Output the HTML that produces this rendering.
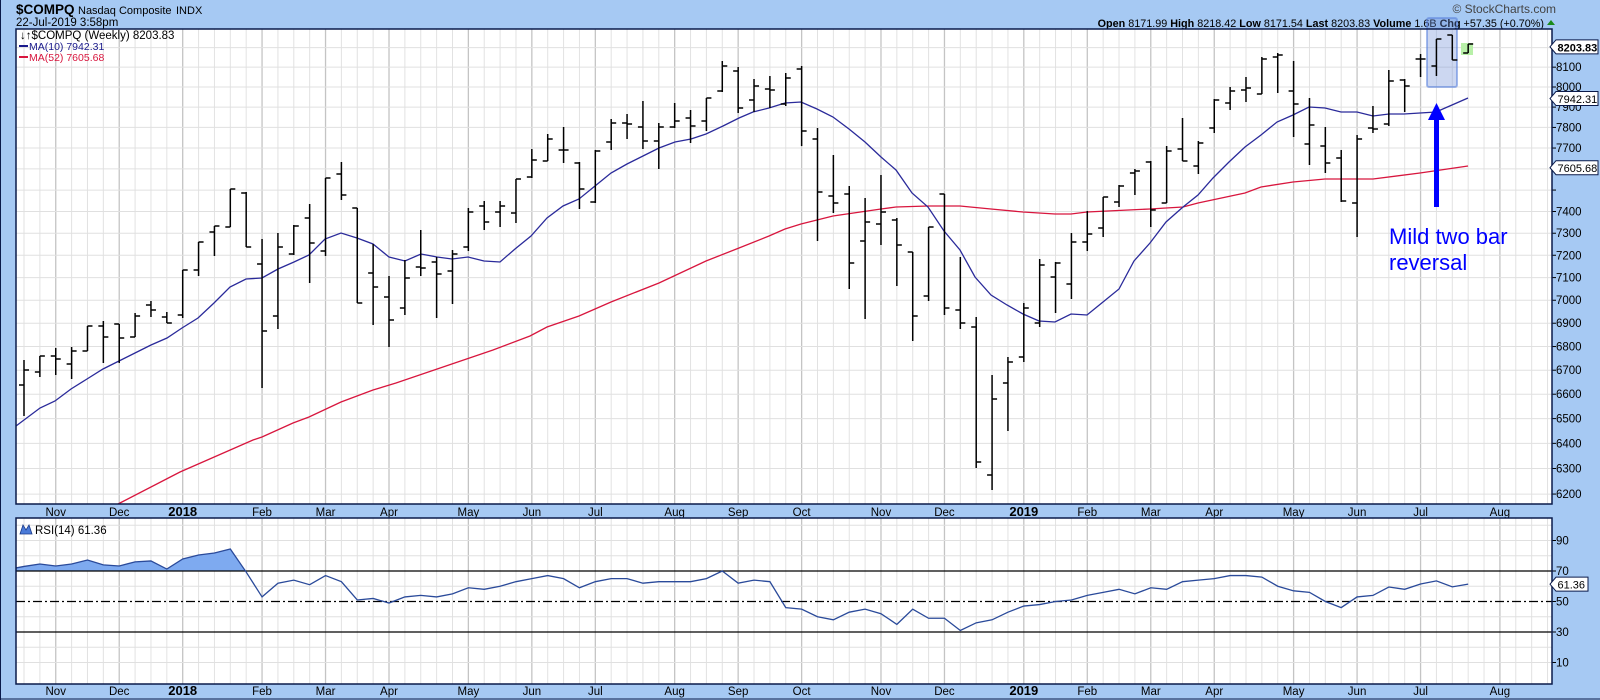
<!DOCTYPE html>
<html><head><meta charset="utf-8">
<style>
html,body{margin:0;padding:0;background:#a6c9f3;}
svg{display:block;}
text{font-family:"Liberation Sans",Arial,sans-serif;}
</style></head>
<body>
<svg id="c" width="1600" height="700" xmlns="http://www.w3.org/2000/svg">
<rect x="0" y="0" width="1600" height="700" fill="#a6c9f3"/>
<line x1="0.5" y1="0" x2="0.5" y2="700" stroke="#0a1a4a"/>
<line x1="0" y1="699" x2="1600" y2="699" stroke="#0a1a4a"/>
<text x="16" y="14" font-size="13.5" font-weight="bold" fill="#000">$COMPQ</text>
<text x="78" y="14" font-size="11" fill="#000">Nasdaq Composite</text>
<text x="176" y="14" font-size="11" fill="#000">INDX</text>
<text x="16" y="26" font-size="11.5" fill="#000">22-Jul-2019 3:58pm</text>
<text x="1556" y="13" font-size="12" fill="#444" text-anchor="end">© StockCharts.com</text>
<text x="1544" y="27" font-size="10.8" text-anchor="end" fill="#000"><tspan font-weight="bold">Open</tspan> 8171.99 <tspan font-weight="bold">High</tspan> 8218.42 <tspan font-weight="bold">Low</tspan> 8171.54 <tspan font-weight="bold">Last</tspan> 8203.83 <tspan font-weight="bold">Volume</tspan> 1.6B <tspan font-weight="bold">Chg</tspan> +57.35 (+0.70%)</text>
<polygon points="1547,25 1555,25 1551,20" fill="#1a8a1a"/>
<g id="main"></g>
<g id="rsi"></g>
</svg>
<script>
var NS="http://www.w3.org/2000/svg";
function el(p,t,a,txt){var e=document.createElementNS(NS,t);for(var k in a)e.setAttribute(k,a[k]);if(txt!=null)e.textContent=txt;p.appendChild(e);return e;}
var g=document.getElementById('main'), r=document.getElementById('rsi');
var L=16,R=1552,T=29,B=504,RT=518,RB=684;
function X(i){return 24+15.87*i;}
function Y(p){return 87-1597*Math.log(p/8000);}
function RY(v){return 571-(v-70)*1.525;}
el(g,'rect',{x:L,y:T,width:R-L,height:B-T,fill:'#fff'});
el(r,'rect',{x:L,y:RT,width:R-L,height:RB-RT,fill:'#fff'});
var months={2:'Nov',6:'Dec',10:'2018',15:'Feb',19:'Mar',23:'Apr',28:'May',32:'Jun',36:'Jul',41:'Aug',45:'Sep',49:'Oct',54:'Nov',58:'Dec',63:'2019',67:'Feb',71:'Mar',75:'Apr',80:'May',84:'Jun',88:'Jul',93:'Aug'};
for(var i=-1;i<98;i++){var x=X(i);if(x<=L||x>=R)continue;var m=months[i]!==undefined;
 el(g,'line',{x1:x,y1:T,x2:x,y2:B,stroke:m?'#c4c4c4':'#e2e2e2','stroke-width':m?1.3:1});
 el(r,'line',{x1:x,y1:RT,x2:x,y2:RB,stroke:m?'#c4c4c4':'#e2e2e2','stroke-width':m?1.3:1});
 if(m){var bold=months[i].length==4;
  el(g,'text',{x:x,y:516,'font-size':bold?13:11.5,'font-weight':bold?'bold':'normal','text-anchor':'middle',fill:'#000'},months[i]);
  el(r,'text',{x:x,y:695,'font-size':bold?13:11.5,'font-weight':bold?'bold':'normal','text-anchor':'middle',fill:'#000'},months[i]);}
}
for(var p=6200;p<=8200;p+=100){var y=Y(p);
 el(g,'line',{x1:L,y1:y,x2:R,y2:y,stroke:'#e0e0e0'});
 el(g,'line',{x1:R,y1:y,x2:R+4,y2:y,stroke:'#000'});
 if(p!=8200&&p!=7600&&p!=7500)el(g,'text',{x:R+4,y:y+4,'font-size':11.5,fill:'#000'},''+p);
}
var bars=[[360,416,385,370],[356,377,372,356],[348,375,356,359],[347,379,364,351],[326,351,351,326],[321,363,326,337],[324,363,324,338],[313,337,337,316],[301,317,305,310],[312,323,317,323],[270,318,315,270],[242,276,270,242],[226,256,232,226],[189,227,227,189],[192,247,193,247],[239,388,264,331],[233,329,316,247],[225,255,254,226],[204,283,218,243],[178,256,251,178],[162,200,174,195],[208,303,208,303],[244,325,273,287],[276,347,297,320],[260,315,308,278],[230,276,267,268],[257,318,262,274],[250,304,271,254],[208,251,247,212],[201,230,206,222],[201,227,212,206],[179,223,213,179],[149,178,177,160],[134,161,161,139],[127,163,150,150],[162,209,163,189],[150,203,202,151],[119,150,142,123],[114,139,123,124],[101,149,127,141],[123,169,141,127],[103,128,127,121],[110,143,118,126],[98,131,121,98],[61,92,91,66],[67,113,71,108],[79,112,100,86],[76,108,89,90],[73,106,104,78],[66,146,69,131],[128,241,139,192],[155,213,196,203],[186,289,194,263],[198,319,241,222],[175,245,224,212],[218,286,220,245],[252,341,252,316],[227,301,296,227],[194,315,194,308],[257,329,310,323],[317,468,327,462],[375,490,475,399],[357,431,383,362],[303,362,357,308],[259,327,323,265],[262,313,277,263],[233,299,284,242],[211,251,242,234],[197,237,228,197],[185,207,202,186],[169,195,173,171],[161,227,162,210],[146,203,203,151],[118,161,149,161],[141,174,166,143],[99,133,128,100],[87,110,103,91],[77,102,90,88],[57,94,94,59],[53,93,57,55],[61,137,91,104],[98,165,144,125],[127,173,146,163],[150,202,158,201],[135,237,203,139],[106,133,128,129],[70,126,124,81],[79,112,80,86],[54,77,59,59],[39,76,66,39],[35,60,35,60],[44,53,53,44]];
el(g,'rect',{x:1427,y:18,width:30,height:69,rx:2,fill:'rgba(110,140,215,0.35)',stroke:'rgba(90,130,220,0.55)','stroke-width':2});
el(g,'rect',{x:1461,y:43,width:12,height:12,fill:'#b8f0a8'});
var ma10=[[16,426],[40,408],[55,401],[71,389],[87,379],[103,369],[119,361],[135,353],[151,345],[167,338],[182,328],[198,318],[214,303],[230,287],[246,279],[262,278],[278,269],[294,262],[309,255],[325,239],[341,233],[357,238],[373,244],[389,257],[405,261],[421,254],[437,257],[452,259],[468,257],[484,261],[500,262],[515,249],[531,236],[547,218],[563,206],[579,199],[595,186],[611,173],[627,164],[643,156],[659,148],[675,142],[691,139],[706,134],[723,126],[739,118],[753,112],[769,108],[785,103],[801,102],[817,109],[833,117],[849,129],[865,142],[881,157],[896,170],[912,193],[928,207],[944,231],[960,250],[975,277],[991,295],[1007,305],[1023,314],[1039,321],[1055,322],[1071,314],[1087,315],[1103,302],[1119,289],[1134,261],[1150,243],[1166,222],[1183,207],[1198,195],[1213,178],[1229,162],[1245,147],[1261,135],[1277,122],[1293,115],[1309,107],[1325,108],[1341,112],[1357,112],[1373,116],[1389,114],[1404,114],[1420,113],[1436,112],[1452,105],[1468,98]];
var ma52=[[118,504],[180,472],[253,440],[262,437],[293,423],[309,417],[341,402],[373,390],[396,383],[493,350],[530,336],[547,327],[579,316],[611,302],[659,283],[706,261],[739,248],[769,236],[785,229],[801,224],[833,216],[881,209],[896,207],[928,206],[960,206],[991,209],[1023,212],[1055,214],[1071,214],[1087,212],[1150,209],[1166,208],[1183,207],[1198,203],[1245,193],[1261,187],[1293,182],[1325,179],[1373,179],[1420,173],[1468,166]];
function pts(a){return a.map(function(q){return q[0]+','+q[1];}).join(' ');}
el(g,'polyline',{points:pts(ma52),fill:'none',stroke:'#d8163e','stroke-width':1.3});
el(g,'polyline',{points:pts(ma10),fill:'none',stroke:'#2a2a9a','stroke-width':1.3});
for(var i=0;i<bars.length;i++){var b=bars[i],x=X(i);
 el(g,'line',{x1:x,y1:b[0],x2:x,y2:b[1],stroke:'#000','stroke-width':1.5});
 el(g,'line',{x1:x-5,y1:b[2],x2:x,y2:b[2],stroke:'#000','stroke-width':1.5});
 el(g,'line',{x1:x,y1:b[3],x2:x+5,y2:b[3],stroke:'#000','stroke-width':1.5});
}
el(g,'rect',{x:1434,y:117,width:5,height:90,fill:'#0000ff'});
el(g,'polygon',{points:'1428,120 1445,120 1436.5,103',fill:'#0000ff'});
el(g,'text',{x:1389,y:244,'font-size':22,fill:'#0000ff'},'Mild two bar');
el(g,'text',{x:1389,y:270,'font-size':22,fill:'#0000ff'},'reversal');
el(g,'text',{x:20,y:39,'font-size':11.5,'font-family':'DejaVu Sans Mono, monospace',fill:'#000'},'↓↑$COMPQ (Weekly) 8203.83');
el(g,'line',{x1:19,y1:46,x2:28,y2:46,stroke:'#1a1a8c','stroke-width':2});
el(g,'text',{x:29,y:50,'font-size':10.5,fill:'#1a1a8c'},'MA(10) 7942.31');
el(g,'line',{x1:19,y1:57,x2:28,y2:57,stroke:'#d8163e','stroke-width':2});
el(g,'text',{x:29,y:61,'font-size':10.5,fill:'#d8163e'},'MA(52) 7605.68');
el(g,'rect',{x:L,y:T,width:R-L,height:B-T,fill:'none',stroke:'#0a1a4a','stroke-width':1.5});
function box(par,y,txt,bold,w){var a=R-2,b=R+4;el(par,'polygon',{points:a+','+y+' '+b+','+(y-7)+' '+(b+w)+','+(y-7)+' '+(b+w)+','+(y+7)+' '+b+','+(y+7),fill:'#fff',stroke:'#0a1a4a'});
 el(par,'text',{x:b+1.5,y:y+4.5,'font-size':11,'font-weight':bold?'bold':'normal',fill:'#000'},txt);}
box(g,Y(8203.83),'8203.83',true,42);
box(g,Y(7942.31),'7942.31',false,42);
box(g,Y(7605.68),'7605.68',false,42);
for(var v=10;v<=100;v+=10){var y=RY(v);if(v==70||v==30||v==50)continue;el(r,'line',{x1:L,y1:y,x2:R,y2:y,stroke:'#e0e0e0'});}
var rv=[73,74.6,73.3,74.6,77.2,74,73.3,76,76.6,71.3,77.9,80.5,81.8,84.4,69.3,53,62,64,61,67,63,51,52,49,53,54,53,55,59,58,60,63,65,67,65,59,63,65,65,62,63,63,63,65,70,62,64,63,46,45,40,38,43,45,42,35,45,39,39,31,36,38,43,47,48,50,51,54,56,58,55,59,58,63,64,65,67,67,66,60,57,56,50,46,53,54,59.5,58,61.5,63.5,59.6,61.4];
var rp=[[16,RY(72)]];for(var i=0;i<rv.length;i++)rp.push([X(i),RY(rv[i])]);
var defs=el(r,'defs',{});var cp=el(defs,'clipPath',{id:'cl'});el(cp,'rect',{x:L,y:RT,width:R-L,height:571-RT});
el(r,'polygon',{points:pts(rp)+' '+X(rv.length-1)+',571 16,571','clip-path':'url(#cl)',fill:'#7eaaf0'});
el(r,'line',{x1:L,y1:RY(70),x2:R,y2:RY(70),stroke:'#000','stroke-width':1.3});
el(r,'line',{x1:L,y1:RY(30),x2:R,y2:RY(30),stroke:'#000','stroke-width':1.3});
el(r,'line',{x1:L,y1:RY(50),x2:R,y2:RY(50),stroke:'#000','stroke-width':1.2,'stroke-dasharray':'9,3,2,3'});
el(r,'polyline',{points:pts(rp),fill:'none',stroke:'#2a4a9a','stroke-width':1.3});
[90,70,50,30,10].forEach(function(v){var y=RY(v);el(r,'line',{x1:R,y1:y,x2:R+4,y2:y,stroke:'#000'});el(r,'text',{x:R+4,y:y+4,'font-size':11.5,fill:'#000'},''+v);});
el(r,'rect',{x:L,y:RT,width:R-L,height:RB-RT,fill:'none',stroke:'#0a1a4a','stroke-width':1.5});
box(r,RY(61.36),'61.36',false,32);
el(r,'path',{d:'M20,534 L23,525 L26,530 L29,525 L32,534 Z',fill:'#4a7ad8',stroke:'#1a3a8a','stroke-width':0.8});
el(r,'text',{x:35,y:534,'font-size':11.5,'font-family':'DejaVu Sans Mono, monospace',fill:'#000'},'RSI(14) 61.36');
</script>
</body></html>
